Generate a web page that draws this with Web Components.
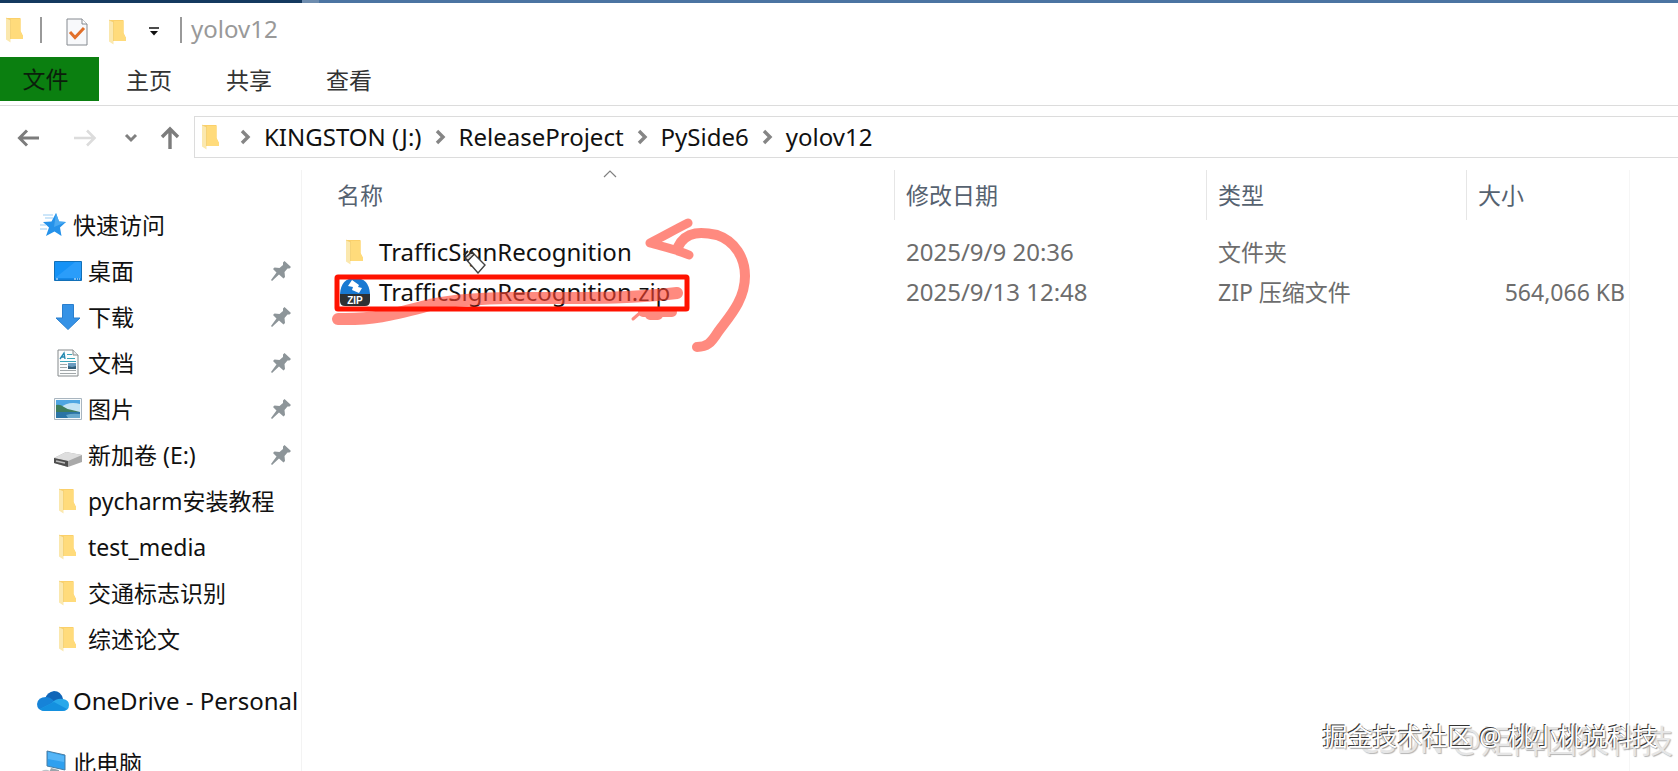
<!DOCTYPE html>
<html lang="zh-CN">
<head>
<meta charset="utf-8">
<title>yolov12</title>
<style>
    html, body { height: 100%; margin: 0; }
    body { overflow: hidden; background: #fff; color: #111;
           font-family: "Noto Sans", "Noto Sans CJK SC", sans-serif;
           font-size: 23px; line-height: 30px; }
</style>
</head>
<body>

<explorer-window>
    <title-bar slot="title">yolov12</title-bar>
    <ribbon-tabs slot="tabs">
        <ribbon-tab file>文件</ribbon-tab>
        <ribbon-tab>主页</ribbon-tab>
        <ribbon-tab>共享</ribbon-tab>
        <ribbon-tab>查看</ribbon-tab>
    </ribbon-tabs>
    <address-bar slot="address">
        <path-crumb>KINGSTON (J:)</path-crumb>
        <path-crumb>ReleaseProject</path-crumb>
        <path-crumb>PySide6</path-crumb>
        <path-crumb>yolov12</path-crumb>
    </address-bar>
    <nav-pane slot="nav">
        <nav-item icon="star" level="root">快速访问</nav-item>
        <nav-item icon="desktop" pinned>桌面</nav-item>
        <nav-item icon="download" pinned>下载</nav-item>
        <nav-item icon="document" pinned>文档</nav-item>
        <nav-item icon="picture" pinned>图片</nav-item>
        <nav-item icon="drive" pinned>新加卷 (E:)</nav-item>
        <nav-item icon="folder">pycharm安装教程</nav-item>
        <nav-item icon="folder">test_media</nav-item>
        <nav-item icon="folder">交通标志识别</nav-item>
        <nav-item icon="folder">综述论文</nav-item>
        <nav-item icon="onedrive" level="root" apart>OneDrive - Personal</nav-item>
        <nav-item icon="computer" level="root" apart>此电脑</nav-item>
    </nav-pane>
    <file-list>
        <file-entry icon="folder" name="TrafficSignRecognition" date="2025/9/9 20:36" type="文件夹"></file-entry>
        <file-entry icon="zip" name="TrafficSignRecognition.zip" date="2025/9/13 12:48" type="ZIP 压缩文件" size="564,066 KB"></file-entry>
    </file-list>
</explorer-window>
<water-mark></water-mark>

<script>
// Small helper: every component gets an open shadow root with its own markup and styles
function shadow(host, html) {
    host.attachShadow({ mode: 'open' }).innerHTML = html;
    return host.shadowRoot;
}

// Icons: [width, height, svg content]
const ICONS = {
    folder: [20, 26, `
        <path d="M1 1h14.500v13l2.500 5v3H5z" fill="#fbd06a"/>
        <path d="M6 2h9.500v12l2.500 5v3H6z" fill="#ffdb7b"/>
        <path d="M1 1l4.500 2v22.500L1 22.500z" fill="#fbe8ae"/>
        <path d="M1 1l4.500 2v19" fill="none" stroke="#f1cc6b" stroke-width=".6"/>`],
    check: [22, 28, `
        <path d="M1 1h15l5 5v21H1z" fill="#f8f9fb" stroke="#858a90"/>
        <path d="M16 1v5h5" fill="#fff" stroke="#858a90"/>
        <path d="M4 14l5 5.500L18 10" fill="none" stroke="#e2702a" stroke-width="3"/>`],
    menu: [12, 12, `<path d="M1 2h10" stroke="#111" stroke-width="1.500"/><path d="M2 5h8l-4 4.500z" fill="#111"/>`],
    back: [24, 20, `<path d="M22 10H3M10 2.500L2.500 10l7.500 7.500" fill="none" stroke="#7c7c7c" stroke-width="3"/>`],
    forward: [24, 20, `<path d="M1 10h20M14 2.500l7.500 7.500-7.500 7.500" fill="none" stroke="#dcdcdc" stroke-width="2.600"/>`],
    recent: [14, 12, `<path d="M2 3l5 5 5-5" fill="none" stroke="#808080" stroke-width="3"/>`],
    up: [20, 24, `<path d="M10 23V3M2 11l8-8 8 8" fill="none" stroke="#7c7c7c" stroke-width="3.400"/>`],
    chevron: [12, 16, `<path d="M2 2l6 6-6 6" fill="none" stroke="#858585" stroke-width="3.400"/>`],
    sort: [14, 8, `<path d="M1 7l6-6 6 6" fill="none" stroke="#808080" stroke-width="1.200"/>`],
    pin: [20, 20, `
        <path d="M13.500 0l6.500 6-1.500 1.500h-2L13.500 11l.5 5-1.500 1.500-4.500-4L1 20l-1-1 5.500-7.500L2 8l1.500-1.500 5 .5L12 4V1.500z" fill="#8d9599"/>`],
    star: [26, 24, `
        <path d="M16 0l3 8.500 7 .5-6 5.500 1.500 8.500-7-4.500L6 23l3-8.500L3 9l8.500-.5z" fill="#2592ea"/>
        <path d="M16 0l3 8.500 7 .5-12 5z" fill="#4aa9f1"/>
        <path d="M3 2h10M5 5h8M0 12h6M0 16h7" stroke="#9bcdf3" stroke-width="1"/>`],
    desktop: [28, 20, `
        <path d="M.500 .500h27v19H.500z" fill="#1592f6" stroke="#1270b8"/>
        <path d="M1 17L21 1h6v16z" fill="#2a9dfa"/>
        <path d="M1 17.500h26V19H1z" fill="#1380dc"/>
        <path d="M2 18h2M20 18h2M23 18h1M25 18h1" stroke="#e7f4ff"/>`],
    download: [26, 26, `<path d="M7.500 .500h11V14H25L13 25.500 1 14h6.500z" fill="#3592e6" stroke="#2a7fce"/>`],
    document: [22, 28, `
        <path d="M1 1h15l5 5v21H1z" fill="#fcfdfd" stroke="#858a8c"/>
        <path d="M16 1v5h5" fill="#e8ecee" stroke="#858a8c"/>
        <path d="M3 10l4-6 1 6M4.500 8H8" fill="none" stroke="#2489b0" stroke-width="1.400"/>
        <path d="M10 5.500h5M10 9.500h8M3 12.500h16" stroke="#3aa4b8" stroke-width="1.200"/>
        <path d="M3 15.500h7M3 18.500h7M3 21.500h16M3 24.500h16" stroke="#a2a8aa"/>
        <path d="M11 14h8v6h-8z" fill="#6b9cc0"/><path d="M11 17l4 1 4-1v3h-8z" fill="#34607b"/>`],
    picture: [28, 22, `
        <path d="M.500 .500h27v21H.500z" fill="#f7fafb" stroke="#a9b5bf"/>
        <path d="M2 2h24v18H2z" fill="#4ea5e2"/>
        <path d="M6 10q8-7 20-4v8H14z" fill="#c3e3f4"/>
        <path d="M2 7q4-1 8 2t8 3q4 1 8 2H2z" fill="#3e7c5c"/>
        <path d="M2 14h24v6H2z" fill="#2b74a5"/><path d="M12 17q6-2 14-1v4H14z" fill="#67a8cc"/>`],
    drive: [28, 24, `
        <path d="M0 15L12 9l16 3v7l-14 5L0 20z" fill="#a9a9a9"/>
        <path d="M0 15L12 9l16 3-14 6z" fill="#dedede"/>
        <path d="M0 15l14 3v6L0 20z" fill="#4e4e4e"/>
        <path d="M2 18l9 2" stroke="#bdbdbd" stroke-width="1.500"/>`],
    onedrive: [32, 20, `
        <path d="M8 8Q10 1 17 0q7 0 9 8l-9 7z" fill="#1166b8"/>
        <path d="M8 20q-8 0-8-7 1-7 9-7 4 0 7 3l8 10z" fill="#1683d8"/>
        <path d="M15 12q4-5 11-4 6 1 6 6 0 6-7 6H8q-3 0-5-2z" fill="#28a8ea"/>
        <path d="M3 18l14-7 13 7q-2 2-5 2H8q-3 0-5-2z" fill="#1490df"/>`],
    computer: [28, 26, `
        <path d="M8 1l18 4v15L8 16z" fill="#2fa0ef" stroke="#4a7da3"/>
        <path d="M9 2l16 4v6L9 9z" fill="#54b5f7"/>
        <path d="M12 18l8 2v2h4l1 3H9z" fill="#9aa4ab"/>
        <path d="M0 23q4-4 9-3l6 3v3H0z" fill="#bcc4c9"/>`],
    zip: [30, 28, `
        <path d="M0 16Q1 0 15 0t15 16z" fill="#1879d2"/>
        <path d="M0 16h30v7q0 5-5 5H5q-5 0-5-5z" fill="#2d3134"/>
        <path d="M12 2l7 5-1 2 4 1-3 5-7-3 1-3-5-1z" fill="#fff"/>
        <text x="15" y="26" text-anchor="middle" font-family="Liberation Sans, sans-serif" font-size="10" font-weight="bold" fill="#fff">ZIP</text>`],
    eraser: [24, 24, `
        <path d="M2 8l7-6 13 13-7 8z" fill="#fff" stroke="#444" stroke-width="1.400"/>
        <path d="M2 8l7-6 2 2.500-6 6z" fill="#ddd" stroke="#333" stroke-width="1.400"/>
        <path d="M1 5l4-4" stroke="#222" stroke-width="2"/>`]
};

class UiIcon extends HTMLElement {
    connectedCallback() {
        const [w, h, content] = ICONS[this.getAttribute('name')];
        shadow(this, `
            <style>:host { display: block; flex: none; } svg { display: block; }</style>
            <svg width="${w}" height="${h}" viewBox="0 0 ${w} ${h}" aria-hidden="true">${content}</svg>`);
    }
}

class ExplorerWindow extends HTMLElement {
    connectedCallback() {
        shadow(this, `
            <style>
                :host { display: flex; flex-direction: column; height: 100%; overflow: hidden; }
                .edge { flex: none; height: 3px;
                        background: linear-gradient(90deg, #14395f 18%, #6d8cae 18%, #6d8cae 19%, #4b74a2 19%); }
                .body { display: flex; flex: 1; min-height: 0; }
            </style>
            <div class="edge"></div>
            <slot name="title"></slot>
            <slot name="tabs"></slot>
            <slot name="address"></slot>
            <div class="body"><slot name="nav"></slot><slot></slot></div>`);
    }
}

class TitleBar extends HTMLElement {
    connectedCallback() {
        shadow(this, `
            <style>
                :host { display: flex; align-items: center; height: 54px; padding-left: 5px; color: #999; }
                button { display: flex; margin: 0; padding: 0; border: 0; background: none; }
                .bar { width: 2px; height: 26px; background: #999; }
                .tools { display: flex; flex: none; align-items: center; gap: 20px; padding: 4px 20px 0 24px; }
                .first { margin-right: 15px; }
                .title { padding: 0 0 2px 9px; font-size: 24px; }
            </style>
            <ui-icon class="first" name="folder"></ui-icon>
            <span class="bar"></span>
            <div class="tools">
                <button aria-label="属性"><ui-icon name="check"></ui-icon></button>
                <button aria-label="新建文件夹"><ui-icon name="folder"></ui-icon></button>
                <button aria-label="自定义快速访问工具栏"><ui-icon name="menu"></ui-icon></button>
            </div>
            <span class="bar"></span>
            <span class="title"><slot></slot></span>`);
    }
}

class RibbonTabs extends HTMLElement {
    connectedCallback() {
        shadow(this, `
            <style>:host { display: flex; height: 48px; border-bottom: 1px solid #dcdcdc; }</style>
            <slot></slot>`);
    }
}

class RibbonTab extends HTMLElement {
    connectedCallback() {
        shadow(this, `
            <style>
                :host { display: block; width: 100px; height: 44px; }
                button { width: 100%; height: 100%; margin: 0; padding: 2px 0 0; border: 0;
                         background: none; color: #333; font: inherit; }
                :host([file]) button { background: #0b7f10; color: #0b1e0b; padding: 0 8px 0 0; }
                :host([file]) { width: 99px; }
            </style>
            <button><slot></slot></button>`);
    }
}

class AddressBar extends HTMLElement {
    connectedCallback() {
        shadow(this, `
            <style>
                :host { display: flex; align-items: center; height: 42px; padding: 10px 0 12px 17px; }
                button { display: flex; margin: 0; padding: 0; border: 0; background: none; }
                .buttons { display: flex; align-items: center; padding-top: 2px; }
                .back { margin-right: 32px; }
                .forward { margin-right: 27px; }
                .recent { margin-right: 22px; }
                .path { display: flex; flex: 1; align-items: center; height: 40px; margin-left: 14px;
                        padding-left: 6px; border: 1px solid #dcdcdc; border-right: 0; }
                .path ui-icon { margin-right: 6px; }
            </style>
            <div class="buttons">
                <button class="back" aria-label="后退"><ui-icon name="back"></ui-icon></button>
                <button class="forward" aria-label="前进"><ui-icon name="forward"></ui-icon></button>
                <button class="recent" aria-label="最近浏览的位置"><ui-icon name="recent"></ui-icon></button>
                <button aria-label="上移"><ui-icon name="up"></ui-icon></button>
            </div>
            <div class="path"><ui-icon name="folder"></ui-icon><slot></slot></div>`);
    }
}

class PathCrumb extends HTMLElement {
    connectedCallback() {
        shadow(this, `
            <style>
                :host { display: flex; align-items: center; gap: 12px; padding-left: 13px; font-size: 24px; }
                a { color: #111; text-decoration: none; }
            </style>
            <ui-icon name="chevron"></ui-icon>
            <a href="#"><slot></slot></a>`);
    }
}

class NavPane extends HTMLElement {
    connectedCallback() {
        shadow(this, `
            <style>
                :host { display: block; flex: none; box-sizing: border-box; width: 302px; padding-top: 32px;
                        border-right: 1px solid #f3f3f3; overflow: hidden; }
            </style>
            <nav><slot></slot></nav>`);
    }
}

class NavItem extends HTMLElement {
    connectedCallback() {
        const pin = this.hasAttribute('pinned') ? '<ui-icon name="pin"></ui-icon>' : '';
        shadow(this, `
            <style>
                :host { display: block; }
                :host([apart]) { margin-top: 16px; }
                a { display: flex; align-items: center; height: 46px; padding: 0 10px 0 52px;
                    color: #111; text-decoration: none; white-space: nowrap; }
                .icon { display: flex; justify-content: center; width: 32px; margin-right: 4px; }
                .label { flex: 1; }
                :host([level=root]) a { padding: 0 0 0 37px; }
                :host([icon=onedrive]) .label { font-size: 24px; }
            </style>
            <a href="#">
                <span class="icon"><ui-icon name="${this.getAttribute('icon')}"></ui-icon></span>
                <span class="label"><slot></slot></span>${pin}
            </a>`);
    }
}

// Only carries the data of one row, file-list draws it
class FileEntry extends HTMLElement {}

class FileList extends HTMLElement {
    connectedCallback() {
        const rows = [...this.querySelectorAll('file-entry')].map(f => {
            const get = name => f.getAttribute(name) || '';
            return `<tr>
                <td><div class="name"><span class="icon"><ui-icon name="${get('icon')}"></ui-icon></span>${get('name')}</div></td>
                <td class="when">${get('date')}</td><td>${get('type')}</td><td class="size">${get('size')}</td>
            </tr>`;
        }).join('');
        shadow(this, `
            <style>
                :host { display: block; position: relative; flex: 1; min-width: 0; padding: 0 48px 0 24px; }
                .sheet { height: 100%; border-right: 1px solid #f6f6f6; }
                table { width: 100%; border-collapse: separate; border-spacing: 0; table-layout: fixed; color: #6d6d6d; }
                th { height: 50px; padding: 0 11px; border-left: 1px solid #e6e6e6; text-align: left;
                     font-weight: 400; color: #566270; }
                th:first-child { border-left: 0; }
                td { height: 40px; padding: 0 12px; white-space: nowrap; }
                tbody::before { content: ''; display: block; height: 12px; }
                .date { width: 312px; } .type { width: 260px; } .bytes { width: 163px; }
                .name { display: flex; align-items: center; color: #111; font-size: 24px; }
                .when { font-size: 24px; }
                .icon { display: flex; justify-content: center; width: 30px; margin-right: 9px; }
                td:first-child { padding-left: 14px; }
                .size { text-align: right; padding-right: 4px; }
                /* things that float over the list */
                .sort { position: absolute; left: 301px; top: 0; }
                .cursor { position: absolute; left: 161px; top: 80px; }
                .marks { position: absolute; left: 18px; top: 40px; }
            </style>
            <div class="sheet">
                <table>
                    <colgroup><col><col class="date"><col class="type"><col class="bytes"></colgroup>
                    <thead><tr><th>名称</th><th>修改日期</th><th>类型</th><th>大小</th></tr></thead>
                    <tbody>${rows}</tbody>
                </table>
            </div>
            <ui-icon class="sort" name="sort"></ui-icon>
            <ui-icon class="cursor" name="eraser"></ui-icon>
            <svg class="marks" width="440" height="150" viewBox="320 210 440 150" aria-hidden="true">
                <!-- hand drawn underline, scribble and arrow -->
                <g fill="none" stroke="#ff4432" opacity=".62" stroke-linecap="round" stroke-linejoin="round">
                    <path d="M338 319C375 320 395 314 430 305C500 291 590 304 677 293" stroke-width="12"/>
                    <path d="M643 312H672M650 315H658" stroke-width="10"/>
                    <path d="M633 319l8-7" stroke-width="3"/>
                    <path d="M688 223C674 230 662 237 650 243C664 247 678 250 689 255" stroke-width="9"/>
                    <path d="M678 247C686 230 703 232 717 235C735 241 745 258 745 276C745 301 728 318 718 332C711 343 707 347 697 347" stroke-width="10"/>
                </g>
                <rect x="337" y="277" width="350" height="32" rx="1" fill="none" stroke="#ff1200" stroke-width="5"/>
            </svg>`);
    }
}

class WaterMark extends HTMLElement {
    connectedCallback() {
        shadow(this, `
            <style>
                :host { position: absolute; right: 0; bottom: 0; white-space: nowrap; }
                span { position: absolute; }
                .back { right: 5px; bottom: 8px; font-size: 32px; line-height: 44px; color: #e6e6e6;
                        text-shadow: 1px 1px 1px #b4b4b4; }
                .front { right: 20px; bottom: 17px; font-size: 25px; line-height: 36px; color: #fff;
                         text-shadow: -1px -1px 0 #333, 1px 1px 1px #999; }
            </style>
            <span class="back">CSDN @矩阵因果科技</span>
            <span class="front">掘金技术社区 @ 桃小桃说科技</span>`);
    }
}

customElements.define('ui-icon', UiIcon);
customElements.define('explorer-window', ExplorerWindow);
customElements.define('title-bar', TitleBar);
customElements.define('ribbon-tabs', RibbonTabs);
customElements.define('ribbon-tab', RibbonTab);
customElements.define('address-bar', AddressBar);
customElements.define('path-crumb', PathCrumb);
customElements.define('nav-pane', NavPane);
customElements.define('nav-item', NavItem);
customElements.define('file-entry', FileEntry);
customElements.define('file-list', FileList);
customElements.define('water-mark', WaterMark);
</script>
</body>
</html>
